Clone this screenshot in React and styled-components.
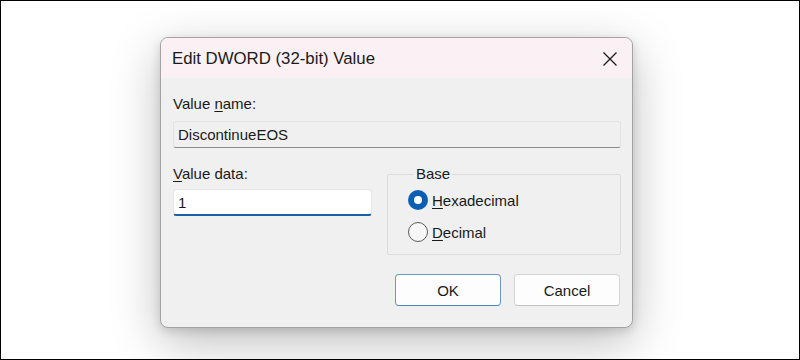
import React from 'react';
import styled, { createGlobalStyle } from 'styled-components';

const GlobalStyle = createGlobalStyle`
  html, body { margin: 0; padding: 0; }
  body {
    width: 800px;
    height: 360px;
    overflow: hidden;
    font-family: "Liberation Sans", Arial, sans-serif;
    color: #1a1a1a;
  }
  * { box-sizing: border-box; }
`;

const Stage = styled.div`
  width: 800px;
  height: 360px;
  border: 1px solid #000;
  background: #fff;
  padding: 36px 0 0 159px;
`;

const Dialog = styled.div`
  width: 473px;
  border: 1px solid #a3a3a3;
  border-radius: 8px;
  background: #f0f0f0;
  overflow: hidden;
  box-shadow: 0 14px 48px rgba(0, 0, 0, 0.26), 0 3px 10px rgba(0, 0, 0, 0.14);
`;

const TitleBar = styled.div`
  height: 40px;
  display: flex;
  align-items: center;
  justify-content: space-between;
  padding: 0 10px 0 11px;
  background: #fbf0f4;
`;

const Title = styled.span`
  font-size: 16.8px;
  color: #1a1a1a;
  padding-top: 1px;
`;

const CloseButton = styled.button`
  width: 44px;
  height: 36px;
  border: 0;
  background: transparent;
  display: flex;
  align-items: center;
  justify-content: center;
  padding: 0;
  margin-right: -10px;
  margin-top: 1px;
`;

const Body = styled.div`
  padding: 17px 11px 21px 12px;
  display: flex;
  flex-direction: column;
`;

const Label = styled.div`
  font-size: 15px;
  line-height: 18px;
  margin-bottom: ${(p) => p.$gap || 0}px;
`;

const Key = styled.span`
  text-decoration: underline;
  text-underline-offset: 2px;
  text-decoration-thickness: 1px;
`;

const Field = styled.div`
  height: 27px;
  display: flex;
  align-items: center;
  padding: 0 4px;
  font-size: 15px;
  border: 1px solid ${(p) => (p.$active ? '#e6e6e6' : '#e2e2e2')};
  border-bottom: ${(p) => (p.$active ? '2px solid #1b5fa5' : '1px solid #8c8c8c')};
  border-radius: 3px;
  background: ${(p) => (p.$active ? '#ffffff' : '#f0f0f0')};
`;

const Row = styled.div`
  display: flex;
  gap: 15px;
  margin-top: 17px;
`;

const DataColumn = styled.div`
  width: 199px;
  display: flex;
  flex-direction: column;
`;

const Group = styled.fieldset`
  flex: 1;
  margin: 0;
  min-width: 0;
  border: 1px solid #dcdcdc;
  border-radius: 2px;
  padding: 5px 0 10px 20px;
  display: flex;
  flex-direction: column;
  gap: 8px;
`;

const Legend = styled.legend`
  font-size: 15px;
  line-height: 18px;
  padding: 0 2px;
  margin-left: 6px;
`;

const RadioRow = styled.label`
  height: 24px;
  display: flex;
  align-items: center;
  gap: 4px;
  font-size: 15px;
`;

const RadioMark = styled.span`
  width: 20px;
  height: 20px;
  border-radius: 50%;
  display: flex;
  align-items: center;
  justify-content: center;
  background: ${(p) => (p.$checked ? '#0a5fb4' : '#f7f7f7')};
  border: ${(p) => (p.$checked ? '0' : '1px solid #5c5c5c')};
  &::after {
    content: '';
    display: ${(p) => (p.$checked ? 'block' : 'none')};
    width: 8px;
    height: 8px;
    border-radius: 50%;
    background: #fff;
  }
`;

const Buttons = styled.div`
  display: flex;
  justify-content: flex-end;
  gap: 13px;
  margin-top: 19px;
  padding-right: 1px;
`;

const Button = styled.button`
  width: 106px;
  height: 32px;
  font-family: inherit;
  font-size: 15px;
  color: #1a1a1a;
  background: #fdfdfd;
  border: 1px solid ${(p) => (p.$primary ? '#6a98c8' : '#d6d6d6')};
  border-bottom-color: ${(p) => (p.$primary ? '#4f86bf' : '#c2c2c2')};
  border-radius: 4px;
  padding: 0;
`;

function CloseIcon() {
  return (
    <svg width="14" height="14" viewBox="0 0 14 14">
      <path d="M0.5 0.5 L13.5 13.5 M13.5 0.5 L0.5 13.5" stroke="#1a1a1a" strokeWidth="1.3" fill="none" />
    </svg>
  );
}

export default function App() {
  return (
    <>
      <GlobalStyle />
      <Stage>
        <Dialog>
          <TitleBar>
            <Title>Edit DWORD (32-bit) Value</Title>
            <CloseButton aria-label="Close">
              <CloseIcon />
            </CloseButton>
          </TitleBar>
          <Body>
            <Label $gap={8}>
              Value <Key>n</Key>ame:
            </Label>
            <Field>DiscontinueEOS</Field>
            <Row>
              <DataColumn>
                <Label $gap={6}>
                  <Key>V</Key>alue data:
                </Label>
                <Field $active>1</Field>
              </DataColumn>
              <Group>
                <Legend>Base</Legend>
                <RadioRow>
                  <RadioMark $checked />
                  <span>
                    <Key>H</Key>exadecimal
                  </span>
                </RadioRow>
                <RadioRow>
                  <RadioMark />
                  <span>
                    <Key>D</Key>ecimal
                  </span>
                </RadioRow>
              </Group>
            </Row>
            <Buttons>
              <Button $primary>OK</Button>
              <Button>Cancel</Button>
            </Buttons>
          </Body>
        </Dialog>
      </Stage>
    </>
  );
}
